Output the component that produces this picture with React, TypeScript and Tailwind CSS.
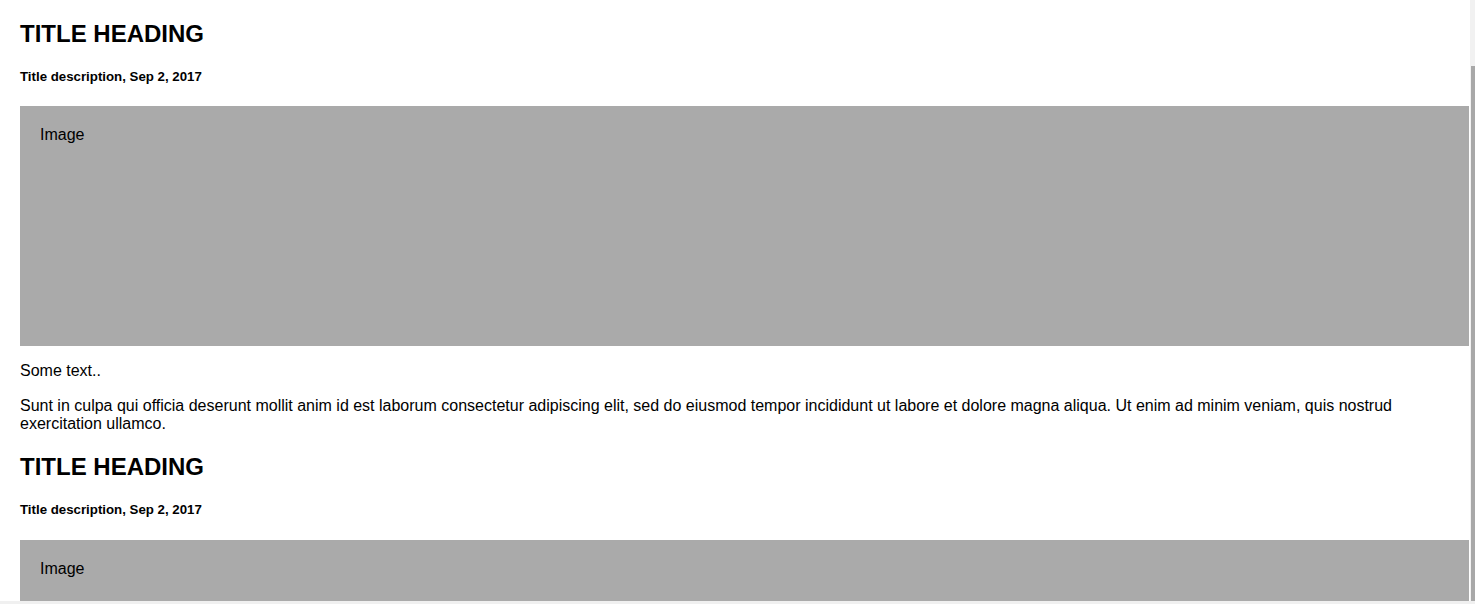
import React from "react";

const Card = ({ full = true }: { full?: boolean }) => {
  return (
    <div>
      <h2 className="text-[24px] font-bold leading-[27.6px] mt-[20px] mb-[20px] text-black">
        TITLE HEADING
      </h2>
      <h5 className="text-[13.28px] font-bold leading-[15.3px] mt-[21.2px] mb-[22.2px] text-black">
        Title description, Sep 2, 2017
      </h5>
      <div className="bg-[#aaaaaa] h-[240px] p-[20px] text-[16px] leading-[18.4px] text-black">
        Image
      </div>
      {full && (
        <>
          <p className="text-[16px] leading-[18.4px] my-[16px] text-black">Some text..</p>
          <p className="text-[16px] leading-[18.4px] my-[16px] text-black">
            Sunt in culpa qui officia deserunt mollit anim id est laborum consectetur adipiscing elit,
            sed do eiusmod tempor incididunt ut labore et dolore magna aliqua. Ut enim ad minim veniam,
            quis nostrud exercitation ullamco.
          </p>
        </>
      )}
    </div>
  );
};

const App = () => {
  return (
    <div
      className="h-[604px] w-[1475px] overflow-hidden flex flex-col bg-white"
      style={{ fontFamily: '"Liberation Sans", Arial, sans-serif' }}
    >
      <div className="flex flex-1 min-h-0">
        <div className="flex-1 min-w-0 overflow-hidden pl-[20px] pr-[1px]">
          {/* margin collapse wrapper */}
          <div className="flow-root">
            <Card />
            <Card full={false} />
          </div>
        </div>
        {/* scrollbar */}
        <div className="w-[5px] bg-[#f1f1f1] flex flex-col">
          <div className="h-[66px]" />
          <div className="flex-1 ml-[1px] bg-[#a8a8a8]" />
        </div>
      </div>
      <div className="h-[3px] bg-[#f0f0f0]" />
    </div>
  );
};

export default App;
